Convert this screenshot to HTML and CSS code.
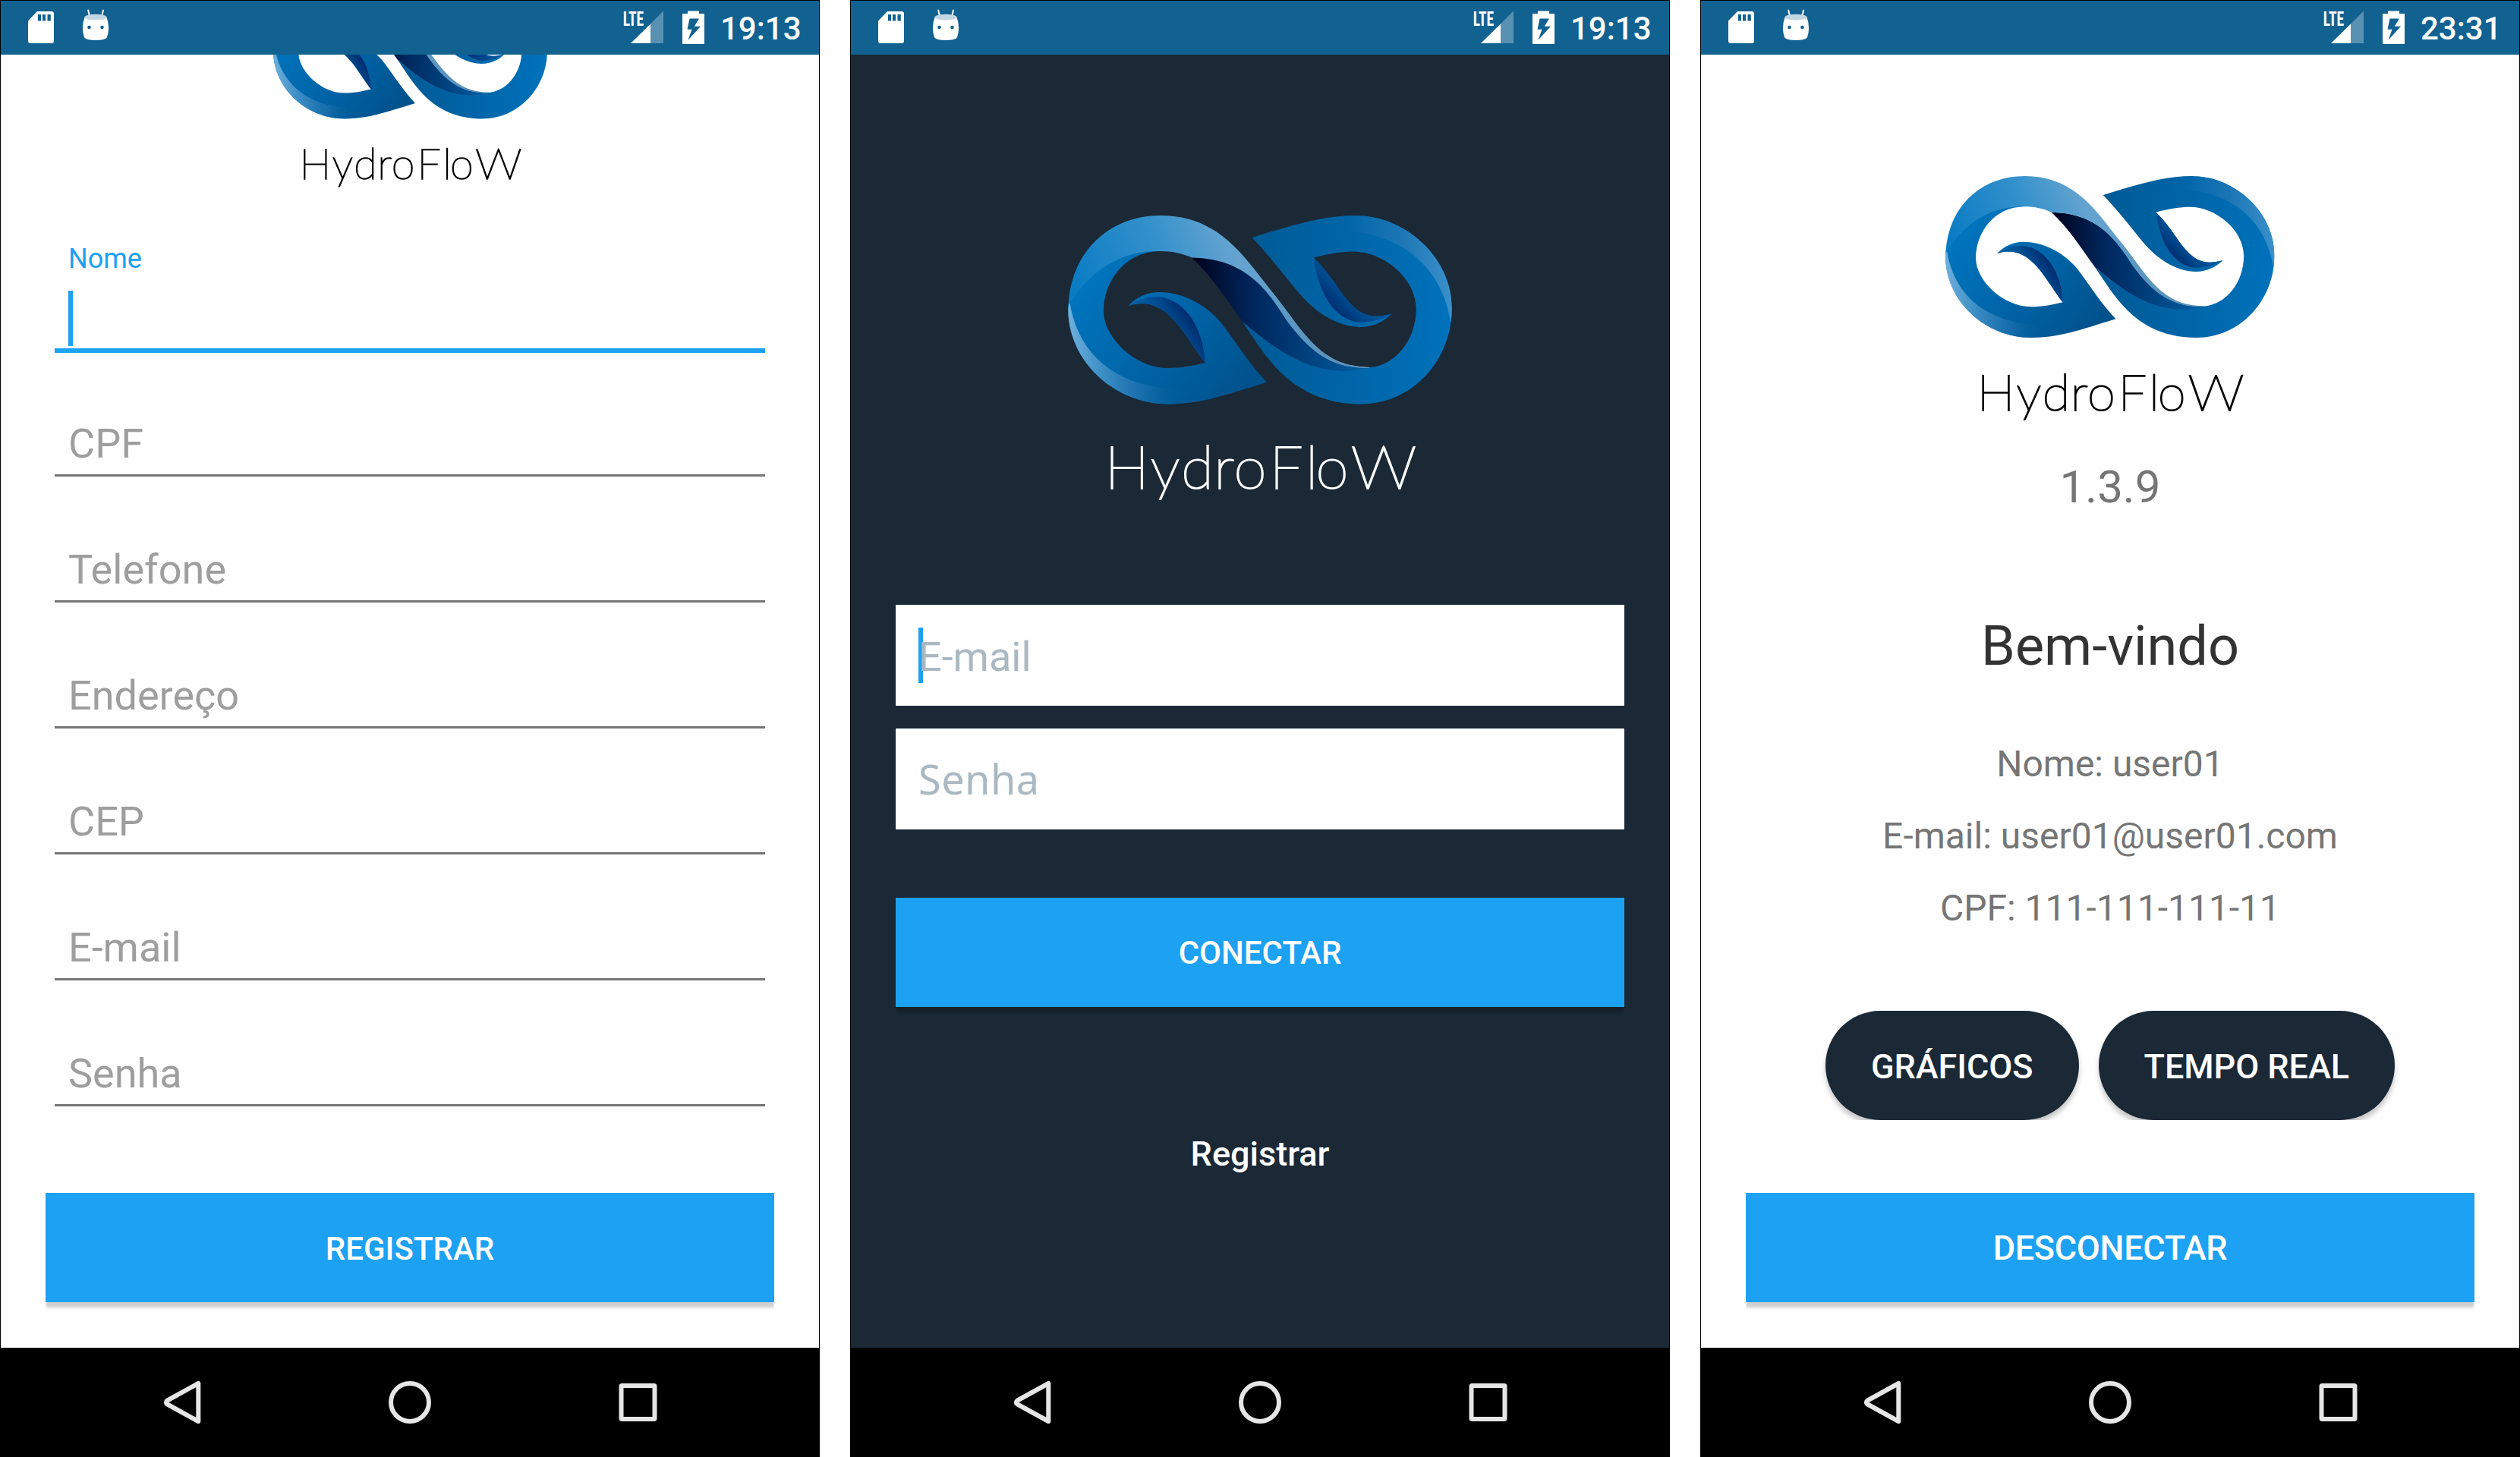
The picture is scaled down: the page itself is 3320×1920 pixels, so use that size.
FILE: index.html
```html
<!DOCTYPE html>
<html lang="pt-BR">
<head>
<meta charset="utf-8">
<title>HydroFloW</title>
<link rel="stylesheet" href="styles.css">
</head>
<body>

<svg class="defs" width="0" height="0" aria-hidden="true">
  <defs>
    <linearGradient id="g-top" gradientUnits="userSpaceOnUse" x1="100" y1="340" x2="620" y2="140">
      <stop offset="0" stop-color="#0a7cc3"/><stop offset=".55" stop-color="#3290cb"/><stop offset="1" stop-color="#66a4d0"/>
    </linearGradient>
    <linearGradient id="g-edge" gradientUnits="userSpaceOnUse" x1="600" y1="0" x2="1090" y2="0">
      <stop offset="0" stop-color="#66a4d0" stop-opacity="0"/><stop offset=".45" stop-color="#5a98c2"/><stop offset=".8" stop-color="#5b90b8"/><stop offset="1" stop-color="#5f93b8"/>
    </linearGradient>
    <linearGradient id="g-left" gradientUnits="userSpaceOnUse" x1="130" y1="300" x2="640" y2="690">
      <stop offset="0" stop-color="#0074bd"/><stop offset=".5" stop-color="#0064a7"/><stop offset="1" stop-color="#00528c"/>
    </linearGradient>
    <linearGradient id="g-left-rim" gradientUnits="userSpaceOnUse" x1="72" y1="0" x2="470" y2="0">
      <stop offset="0" stop-color="#6fb0dc"/><stop offset=".3" stop-color="#3f8fc6" stop-opacity=".95"/><stop offset=".65" stop-color="#1a6fab" stop-opacity=".8"/><stop offset="1" stop-color="#005a98" stop-opacity="0"/>
    </linearGradient>
    <linearGradient id="g-band" gradientUnits="userSpaceOnUse" x1="500" y1="0" x2="1060" y2="0">
      <stop offset="0" stop-color="#00031f"/><stop offset=".35" stop-color="#00265c"/><stop offset=".7" stop-color="#00427f"/><stop offset="1" stop-color="#005b9f"/>
    </linearGradient>
    <linearGradient id="g-right" gradientUnits="userSpaceOnUse" x1="700" y1="0" x2="1370" y2="0">
      <stop offset="0" stop-color="#005b96"/><stop offset=".5" stop-color="#0065a8"/><stop offset="1" stop-color="#0072bb"/>
    </linearGradient>
    <linearGradient id="g-right-rim" gradientUnits="userSpaceOnUse" x1="1010" y1="0" x2="1372" y2="0">
      <stop offset="0" stop-color="#1a72b0" stop-opacity="0"/><stop offset=".5" stop-color="#1c75b3"/><stop offset="1" stop-color="#3a90cb"/>
    </linearGradient>
    <linearGradient id="g-curl-l" gradientUnits="userSpaceOnUse" x1="400" y1="470" x2="495" y2="405">
      <stop offset="0" stop-color="#005ba0"/><stop offset=".45" stop-color="#00468a"/><stop offset="1" stop-color="#002668"/>
    </linearGradient>
    <linearGradient id="g-curl-r" gradientUnits="userSpaceOnUse" x1="1035" y1="320" x2="965" y2="385">
      <stop offset="0" stop-color="#005499"/><stop offset=".45" stop-color="#00468a"/><stop offset="1" stop-color="#002a6e"/>
    </linearGradient>

    <symbol id="logo" viewBox="72 67 1300 990">
      <path fill="url(#g-left)" d="M385 188C265 188 192 290 192 392C192 480 300 584 410 584C455 584 490 577 536 566C515 540 490 500 465 465C405 380 350 350 276 373C305 343 340 327 380 327C450 327 530 360 590 430C640 495 690 575 745 632C600 677 520 706 410 706C230 706 72 560 72 385C76 300 150 170 385 188Z"/>
      <path fill="url(#g-left-rim)" d="M76 350C100 540 240 655 460 655C540 655 600 665 640 664C560 690 490 706 410 706C230 706 72 560 72 385Z"/>
      <path fill="url(#g-curl-l)" d="M276 373C310 348 345 341 380 343C470 352 530 450 536 566C515 540 490 500 465 465C405 380 350 350 276 373Z"/>
      <path fill="url(#g-band)" d="M491 210C700 212 770 360 817 425C890 520 965 585 1093 583L1093 588C1060 593 1035 597 1001 597C860 593 750 503 661 425C600 340 560 275 491 210Z"/>
      <path fill="url(#g-right)" d="M661 425C735 530 820 706 1065 706C1235 706 1372 560 1372 382C1372 205 1210 67 1047 67C940 67 840 97 695 142C750 198 800 265 850 325C915 405 995 445 1061 445C1105 445 1145 425 1168 400C1090 422 1050 400 995 325C965 280 935 240 904 210C955 196 1000 189 1038 189C1140 189 1251 280 1251 382C1251 490 1180 575 1093 582C1060 590 1035 594 1001 594C860 590 750 500 661 425Z"/>
      <path fill="url(#g-right-rim)" d="M940 73C980 67 1010 67 1047 67C1210 67 1372 205 1372 382C1372 400 1371 415 1368 427C1335 220 1170 110 960 120Z"/>
      <path fill="url(#g-curl-r)" d="M904 210C920 340 985 429 1065 429C1105 429 1145 415 1168 400C1090 422 1050 400 995 325C965 280 935 240 904 210Z"/>
      <path fill="url(#g-top)" d="M73 372C82 185 215 67 385 67C520 67 610 130 698 243C742 300 780 345 817 396C903 516 965 579 1093 581L1093 583C965 588 890 525 817 428C770 360 700 212 491 210C460 196 425 188 385 188C260 184 150 245 73 372Z"/>
      <path fill="url(#g-edge)" d="M600 145C640 172 670 207 698 243C742 300 780 345 817 396C903 516 965 579 1093 581L1093 583C965 588 890 525 817 428C770 360 720 270 600 226Z"/>
      <text class="wordmark" y="993" x="196 352 455 566 633 754 876 911 1030">HydroFlo<tspan textLength="222" lengthAdjust="spacingAndGlyphs">W</tspan></text>
    </symbol>

    <symbol id="sd" viewBox="37 14 34 44">
      <path fill="#fff" fill-rule="evenodd" d="M49 15H68Q71 15 71 18V54Q71 57 68 57H40Q37 57 37 54V27.500ZM50 19V27.500H54V19ZM56 19V27.500H60V19ZM62.500 19V27.500H66.800V19Z"/>
    </symbol>
    <symbol id="droid" viewBox="109 12 34 46">
      <path stroke="#fff" stroke-width="2" stroke-linecap="round" d="M116.200 13.500L118.200 22M136 13.500L134 22"/>
      <path fill="#fff" d="M111.500 23Q126 29 140.500 23Q143 29 143 36Q143 45 140.500 50Q137 53 126 53Q115 53 111.500 50Q109 45 109 36Q109 29 111.500 23Z"/>
      <ellipse cx="126" cy="22.700" rx="14.600" ry="3.900" fill="#c3d7e3"/>
      <circle cx="117.500" cy="36" r="2.300" fill="#116291"/><circle cx="134.500" cy="36" r="2.300" fill="#116291"/>
    </symbol>
    <symbol id="signal" viewBox="820 14 54 44">
      <text class="lte" x="820.700" y="33.500" textLength="27.500" lengthAdjust="spacingAndGlyphs">LTE</text>
      <path fill="#fff" opacity=".3" d="M857 31.500L874 14.500V57H857Z"/>
      <path fill="#fff" d="M831 57L857 31.500V57Z"/>
    </symbol>
    <symbol id="battery" viewBox="899 14 29 44">
      <path fill="#fff" fill-rule="evenodd" d="M906 14.500H921V18H928V58H899V18H906ZM908.500 24.500L905.500 38.700H911.500L906.500 52.800L923 34.700H914.800L921 24.500Z"/>
    </symbol>
    <symbol id="nav" viewBox="0 0 1080 144">
      <g fill="none" stroke="#e6e6e6" stroke-width="6" stroke-linejoin="round">
        <path d="M261.300 47V97L220.500 74.500Q217 72 220.500 69.500Z"/>
        <circle cx="540" cy="72" r="25"/>
        <rect x="818.500" y="50" width="44" height="44" rx="1"/>
      </g>
    </symbol>
  </defs>
</svg>

<main class="screens">
  <section class="phone">
    <header class="status">
      <svg class="i-sd"><use href="#sd"/></svg>
      <svg class="i-droid"><use href="#droid"/></svg>
      <svg class="i-signal"><use href="#signal"/></svg>
      <svg class="i-battery"><use href="#battery"/></svg>
      <span class="clock">19:13</span>
    </header>
    <div class="content register">
      <svg class="logo logo-small"><use href="#logo"/></svg>
      <div class="fields">
        <div class="field field-active"><span class="field-label">Nome</span><i class="caret"></i></div>
        <div class="field">CPF</div>
        <div class="field">Telefone</div>
        <div class="field">Endereço</div>
        <div class="field">CEP</div>
        <div class="field">E-mail</div>
        <div class="field">Senha</div>
      </div>
      <div class="button">REGISTRAR</div>
    </div>
    <svg class="nav"><use href="#nav"/></svg>
  </section>

  <section class="phone">
    <header class="status">
      <svg class="i-sd"><use href="#sd"/></svg>
      <svg class="i-droid"><use href="#droid"/></svg>
      <svg class="i-signal"><use href="#signal"/></svg>
      <svg class="i-battery"><use href="#battery"/></svg>
      <span class="clock">19:13</span>
    </header>
    <div class="content login">
      <svg class="logo logo-large"><use href="#logo"/></svg>
      <div class="box box-active"><i class="caret"></i><span>E-mail</span></div>
      <div class="box box-password"><span>Senha</span></div>
      <div class="button">CONECTAR</div>
      <div class="link">Registrar</div>
    </div>
    <svg class="nav"><use href="#nav"/></svg>
  </section>

  <section class="phone">
    <header class="status">
      <svg class="i-sd"><use href="#sd"/></svg>
      <svg class="i-droid"><use href="#droid"/></svg>
      <svg class="i-signal"><use href="#signal"/></svg>
      <svg class="i-battery"><use href="#battery"/></svg>
      <span class="clock">23:31</span>
    </header>
    <div class="content home">
      <svg class="logo logo-medium"><use href="#logo"/></svg>
      <div class="version">1.3.9</div>
      <h1 class="welcome">Bem-vindo</h1>
      <div class="user">
        <div>Nome: user01</div>
        <div>E-mail: user01@user01.com</div>
        <div>CPF: 111-111-111-11</div>
      </div>
      <div class="pills"><div class="pill">GRÁFICOS</div><div class="pill">TEMPO REAL</div></div>
      <div class="button button-large">DESCONECTAR</div>
    </div>
    <svg class="nav"><use href="#nav"/></svg>
  </section>
</main>
</body>
</html>
```
FILE: styles.css
```css
* { box-sizing: border-box; }
body { margin: 0; background: #fff; font-family: Roboto, "Liberation Sans", sans-serif; }
svg { display: block; flex: none; }
.defs { position: absolute; }

.screens { display: flex; gap: 40px; width: 3320px; height: 1920px; }
.phone { position: relative; display: flex; flex-direction: column; width: 1080px; height: 1920px; overflow: hidden; }
.phone::after { content: ""; position: absolute; inset: 0; border: 1px solid #000; }

.status { display: flex; align-items: center; height: 72px; padding: 0 24px 0 37px; background: #116291; color: #fff; }
.i-sd { width: 34px; height: 44px; }
.i-droid { width: 34px; height: 46px; margin-left: 38px; margin-top: -2px; }
.i-signal { width: 54px; height: 44px; margin-left: auto; }
.i-battery { width: 29px; height: 44px; margin-left: 25px; }
.clock { margin-left: 21px; padding-top: 3px; font-size: 42px; font-weight: 500; line-height: 50px; width: 107px; }
.lte { font: 700 25.500px "Roboto Condensed", Roboto, sans-serif; fill: #fff; }

.content { flex: 1; min-height: 0; display: flex; flex-direction: column; overflow: hidden; padding: 0 60px; background: #fefefe; }
.nav { width: 1080px; height: 144px; background: #000; }

.logo { align-self: center; overflow: visible; color: #000; }
.logo-small { width: 361px; height: 275px; margin-top: -92.600px; }
.logo-large { width: 506px; height: 385px; margin-top: 212.300px; color: #fff; }
.logo-medium { width: 433.500px; height: 330px; margin-top: 160.300px; }
.wordmark { font: 100 201px Lato, sans-serif; fill: currentColor; stroke: currentColor; stroke-width: 5.500px; }

.caret { display: block; width: 6px; height: 73px; background: #1da1f2; }

.fields { margin: 63px 12px 0; }
.field { display: flex; flex-direction: column; justify-content: flex-end; height: 166px; padding: 0 20px 8px 18px; border-bottom: 3px solid #757575; color: #9e9e9e; font-size: 54px; line-height: 64px; }
.field-active { height: 148px; padding-top: 3px; padding-bottom: 3px; border-bottom: 6px solid #1da1f2; justify-content: space-between; }
.field-active + .field { height: 163px; }
.field-label { color: #1da1f2; font-size: 36px; line-height: 42px; }

.button { display: flex; align-items: center; justify-content: center; flex: none; height: 144px; padding-top: 3px; background: #1da1f2; color: #fff; font-size: 42px; font-weight: 500; line-height: 50px; box-shadow: 0 7px 4px rgba(0, 0, 0, .19); clip-path: inset(-2px 0 -14px 0); }
.button-large { font-size: 45px; letter-spacing: -.3px; }
.register .button { margin-top: 114px; }

.login { background: #1b2836; }
.box { display: flex; align-items: center; height: 133px; flex: none; padding-left: 30px; background: #fff; color: #aab8c2; font-size: 54px; line-height: 64px; }
.box .caret { margin-right: -6px; }
.box-active { margin-top: 127.700px; }
.box-active span { position: relative; padding-top: 6px; }
.box-password { margin-top: 30px; font-family: "Noto Sans", sans-serif; letter-spacing: .5px; }
.login .button { margin-top: 90px; }
.link { margin-top: 168px; text-align: center; color: #fff; font-size: 45px; font-weight: 500; line-height: 52px; }

.home { text-align: center; color: #757575; }
.version { margin-top: 45px; font-size: 60px; line-height: 70px; }
.welcome { margin: 133px 0 0; color: #333; font-size: 72px; font-weight: 400; line-height: 84px; }
.user { margin-top: 84px; font-size: 48px; line-height: 57px; display: flex; flex-direction: column; gap: 38px; }
.pills { display: flex; justify-content: center; gap: 26px; margin-top: 106.700px; height: 144px; overflow: hidden; }
.pill { display: flex; align-items: center; padding: 3px 60px 0; border-radius: 72px; background: #1b2836; color: #fff; font-size: 45px; font-weight: 500; letter-spacing: -.05px; box-shadow: 0 6px 6px rgba(0, 0, 0, .22); }
.home .button { margin-top: 96px; }
```
